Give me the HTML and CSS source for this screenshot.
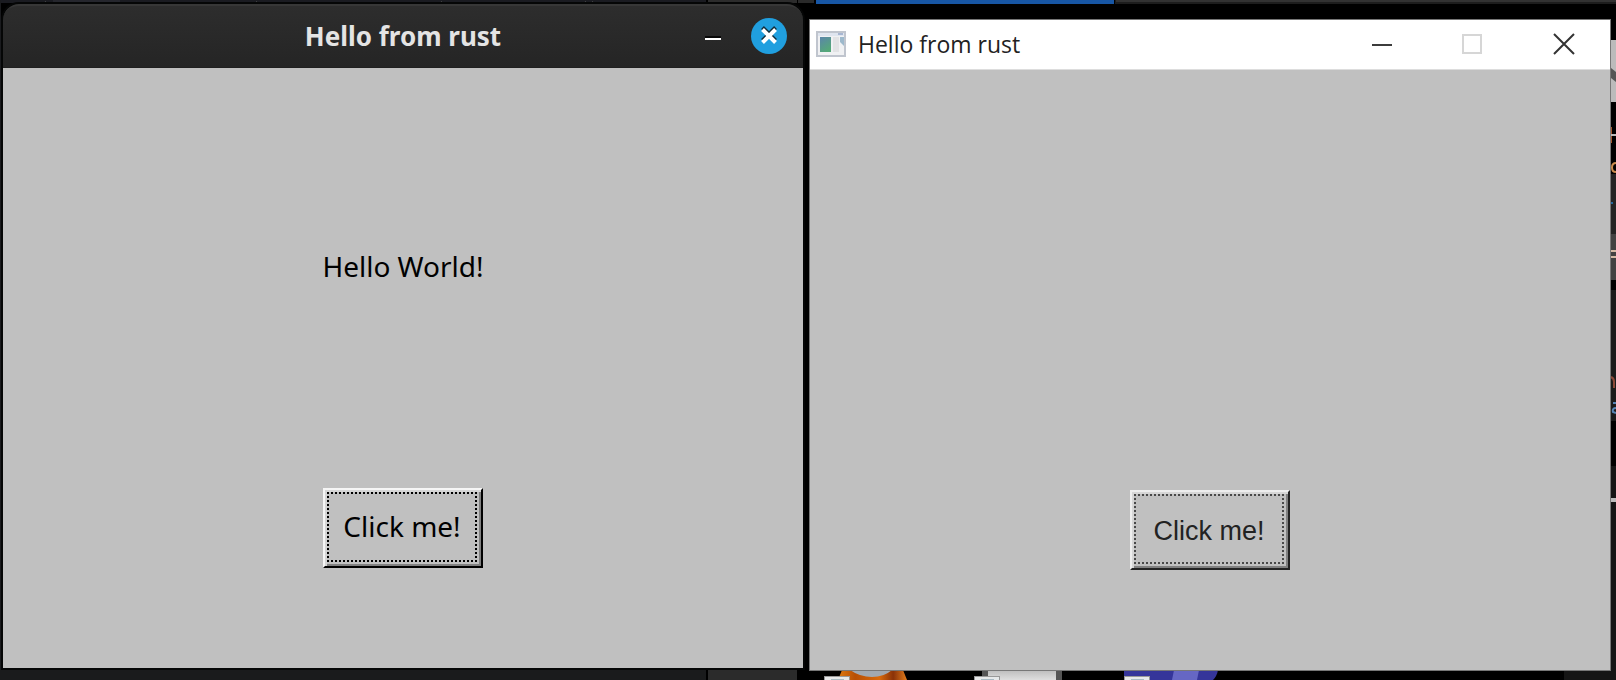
FILE: index.html
```html
<!DOCTYPE html>
<html lang="en">
<head>
<meta charset="utf-8">
<title>Hello from rust</title>
<link rel="stylesheet" href="styles.css">
</head>
<body>
<svg class="backdrop" viewBox="0 0 1616 680" preserveAspectRatio="none" aria-hidden="true">
  <defs>
    <linearGradient id="fox"><stop offset="0" stop-color="#dd7a12"/><stop offset=".25" stop-color="#b84f04"/><stop offset=".6" stop-color="#d96a0c"/><stop offset=".8" stop-color="#8a3208"/><stop offset="1" stop-color="#e07c1c"/></linearGradient>
    <linearGradient id="paper" x2="0" y2="1"><stop offset="0" stop-color="#bcbcbc"/><stop offset="1" stop-color="#dedede"/></linearGradient>
  </defs>
  <rect width="1616" height="680" fill="#000"/>
  <rect width="706" height="3" fill="#1a1b21"/>
  <rect x="53" width="67" height="3" fill="#25262d"/>
  <path d="M42 4l4-3v3zM256 1l4 3h-4zM438 4l4-3v3zM582 4l4-3v3zM592 1l4 3h-4z" fill="#555"/>
  <rect x="708" width="89" height="3" fill="#2c2c2c"/>
  <rect x="798" width="16" height="3" fill="#2a2a2a"/>
  <rect x="816" width="298" height="4" fill="#1756a5"/>
  <rect x="1115" width="501" height="4" fill="#1d1d1d"/>
  <rect x="1116" width="500" height="2" fill="#323232"/>
  <rect y="0" width="1" height="680" fill="#1a1b1e"/>
  <rect y="670" width="706" height="10" fill="#1a1b1c"/>
  <rect x="708" y="670" width="89" height="10" fill="#2b2b2b"/>
  <path d="M838 680l4-10h61l4 10z" fill="url(#fox)"/>
  <path d="M850 670h42q-8 7-20 7t-22-7z" fill="#a1a9b1"/>
  <rect x="982" y="670" width="80" height="10" fill="#555"/>
  <rect x="988" y="670" width="68" height="10" fill="url(#paper)"/>
  <path d="M1124 670h94q-1 6-5 10h-89z" fill="#35359a"/>
  <path d="M1174 670h25l-2 10h-25z" fill="#6667c4"/>
  <g fill="#e7e9ea" stroke="#999" stroke-width="1">
    <rect x="824.500" y="676.500" width="25" height="8"/>
    <rect x="974.500" y="676.500" width="25" height="8"/>
    <rect x="1124.500" y="676.500" width="25" height="8"/>
  </g>
  <path d="M831 679h13v1h-13zM981 679h13v1h-13zM1131 679h13v1h-13z" fill="#a8bac4"/>
  <rect x="1564" y="670" width="52" height="10" fill="#151515"/>
  <rect x="1611" y="40" width="5" height="62" fill="#bbb"/>
  <path d="M1611 68l5 4v10l-5-4z" fill="#555"/>
  <rect x="1611" y="127" width="1" height="16" fill="#a5572e"/>
  <rect x="1611" y="134" width="5" height="2" fill="#bbb"/>
  <rect x="1611" y="174" width="5" height="60" fill="#242424"/>
  <path d="M1616 163q-4 0-4 4.500t4 4.500" fill="none" stroke="#c98b4c" stroke-width="2"/>
  <rect x="1611" y="202" width="2" height="2" fill="#24679b"/>
  <rect x="1611" y="234" width="5" height="46" fill="#424242"/>
  <path d="M1611 250h5v2h-5zM1611 256h5v2h-5z" fill="#d5bba6"/>
  <rect x="1611" y="290" width="5" height="131" fill="#1b1b1b"/>
  <path d="M1611 377q3 1 3 5v6" fill="none" stroke="#8c4938" stroke-width="2"/>
  <path d="M1616 403h-3M1616 408q-4 0-3 4l3 1" fill="none" stroke="#5684b5" stroke-width="2"/>
  <rect x="1611" y="466" width="5" height="214" fill="#151515"/>
  <rect x="1611" y="498" width="5" height="4" fill="#bbb"/>
</svg>
<main class="desktop">
  <section class="window window-linux" aria-label="Hello from rust, Linux">
    <header class="titlebar titlebar-dark">
      <h1 class="title title-centered">Hello from rust</h1>
      <div class="controls-dark">
        <button class="control" type="button" aria-label="Minimize">
          <svg width="16" height="8" viewBox="0 0 16 8"><path d="M0 4h16v2H0z" fill="#080808"/><path d="M0 6h16v2H0z" fill="#fff"/></svg>
        </button>
        <button class="control" type="button" aria-label="Close">
          <svg width="36" height="36" viewBox="0 0 36 36"><circle cx="18" cy="18" r="18" fill="#209fdf"/><path d="M11.500 9.500l13 13M24.500 9.500l-13 13" stroke="#102c3a" stroke-width="4"/><path d="M11.500 11.500l13 13M24.500 11.500l-13 13" stroke="#fff" stroke-width="4"/></svg>
        </button>
      </div>
    </header>
    <div class="client">
      <p class="message">Hello World!</p>
      <button class="push" type="button"><span class="focus">Click me!</span></button>
    </div>
  </section>
  <section class="window window-windows" aria-label="Hello from rust, Windows">
    <header class="titlebar titlebar-light">
      <svg class="app-icon" width="30" height="26" viewBox="0 0 30 26" aria-hidden="true">
        <defs><linearGradient id="pane" x2=".5" y2="1"><stop offset="0" stop-color="#5b85aa"/><stop offset="1" stop-color="#55a879"/></linearGradient></defs>
        <rect x="1" y="1" width="28" height="24" fill="#f0f1f3" stroke="#c0c5ce" stroke-width="2"/>
        <path d="M2 2h26v3H2z" fill="#dfe5ef"/>
        <path d="M22 2h5v2h-5z" fill="#a8b7d2"/>
        <path d="M4 6h11v15H4z" fill="url(#pane)"/>
        <path d="M17 6h6v15h-6z" fill="#e2e3e5"/>
        <path d="M24 6h4v9l-4-4z" fill="#9db9cc"/>
      </svg>
      <h1 class="title title-light">Hello from rust</h1>
      <div class="controls-light">
        <button class="control" type="button" aria-label="Minimize">
          <svg width="20" height="20" viewBox="0 0 20 20"><path d="M0 11h20" stroke="#3c3c3c" stroke-width="2"/></svg>
        </button>
        <button class="control" type="button" aria-label="Maximize" disabled>
          <svg width="20" height="20" viewBox="0 0 20 20"><path d="M0 1h18v18H0z" fill="none" stroke="#d6d6d6" stroke-width="2"/></svg>
        </button>
        <button class="control" type="button" aria-label="Close">
          <svg width="20" height="20" viewBox="0 0 20 20"><path d="M0 0l20 20M20 0L0 20" stroke="#333" stroke-width="2"/></svg>
        </button>
      </div>
    </header>
    <div class="client client-windows">
      <button class="push push-windows" type="button"><span class="focus focus-windows">Click me!</span></button>
    </div>
  </section>
</main>
</body>
</html>
```
FILE: styles.css
```css
* {
  box-sizing: border-box;
}

body {
  margin: 0;
  background: #000;
  font-family: "Noto Sans", sans-serif;
  color: #000;
}

.backdrop {
  position: absolute;
  inset: 0;
  width: 100%;
  height: 100%;
  z-index: -1;
}

.desktop {
  display: grid;
  grid-template-columns: 1fr 1fr;
  gap: 7px;
  min-height: 100vh;
  padding: 4px 6px 10px 3px;
}

.window {
  display: flex;
  flex-direction: column;
}

.window-linux {
  margin-bottom: 2px;
  border-radius: 16px 16px 0 0;
  box-shadow: 0 0 0 2px #050606;
}

.window-windows {
  margin-top: 16px;
  box-shadow: 0 0 0 1px #777;
}

.titlebar {
  display: grid;
  align-items: center;
}

.titlebar-dark {
  grid-template-columns: 1fr auto 1fr;
  height: 64px;
  padding: 0 16px 2px;
  border-top: 2px solid #373737;
  border-bottom: 1px solid #202020;
  border-radius: 16px 16px 0 0;
  background: linear-gradient(#2d2d2d, #252525);
}

.titlebar-light {
  grid-template-columns: auto 1fr auto;
  gap: 12px;
  height: 50px;
  padding: 0 36px 2px 6px;
  border-bottom: 1px solid #ddd;
  background: #fff;
}

.title {
  margin: 0;
  font-size: 26px;
  line-height: 36px;
}

.title-centered {
  grid-column: 2;
  font-weight: 700;
  color: #e4e4e4;
}

.title-light {
  font-family: "Open Sans", sans-serif;
  font-size: 23px;
  font-weight: 400;
  color: #222;
}

.controls-dark {
  display: flex;
  align-items: center;
  justify-content: flex-end;
  gap: 30px;
}

.controls-light {
  display: flex;
  gap: 71px;
}

.control {
  display: flex;
  padding: 0;
  border: 0;
  background: none;
}

.control svg {
  overflow: visible;
}

.app-icon {
  display: block;
}

.client {
  display: flex;
  flex: 1;
  flex-direction: column;
  align-items: center;
  justify-content: space-between;
  min-height: 600px;
  padding: 179px 0 100px;
  background: #c0c0c0;
}

.client-windows {
  justify-content: flex-end;
}

.message {
  margin: 0;
  font-size: 28px;
  line-height: 38px;
}

.push {
  display: flex;
  width: 160px;
  height: 80px;
  padding: 2px;
  border: 2px solid;
  border-color: #f5f5f5 #000 #000 #f5f5f5;
  background: #c0c0c0;
  box-shadow: inset 2px 2px #d6d6d6, inset -2px -2px #808080;
  font-family: "Noto Sans", sans-serif;
  font-size: 28px;
  line-height: 38px;
  color: #000;
}

.focus {
  display: flex;
  flex: 1;
  align-self: stretch;
  align-items: center;
  justify-content: center;
  margin: 0 2px 2px 0;
  padding-bottom: 2px;
  border: 2px dotted #000;
}

.push-windows {
  border-color: #eee #222 #222 #eee;
  font-family: "Liberation Sans", Arial, sans-serif;
  font-size: 27px;
}

.focus-windows {
  padding: 4px 0 0;
  border-color: #484848;
  color: #222;
}
```
